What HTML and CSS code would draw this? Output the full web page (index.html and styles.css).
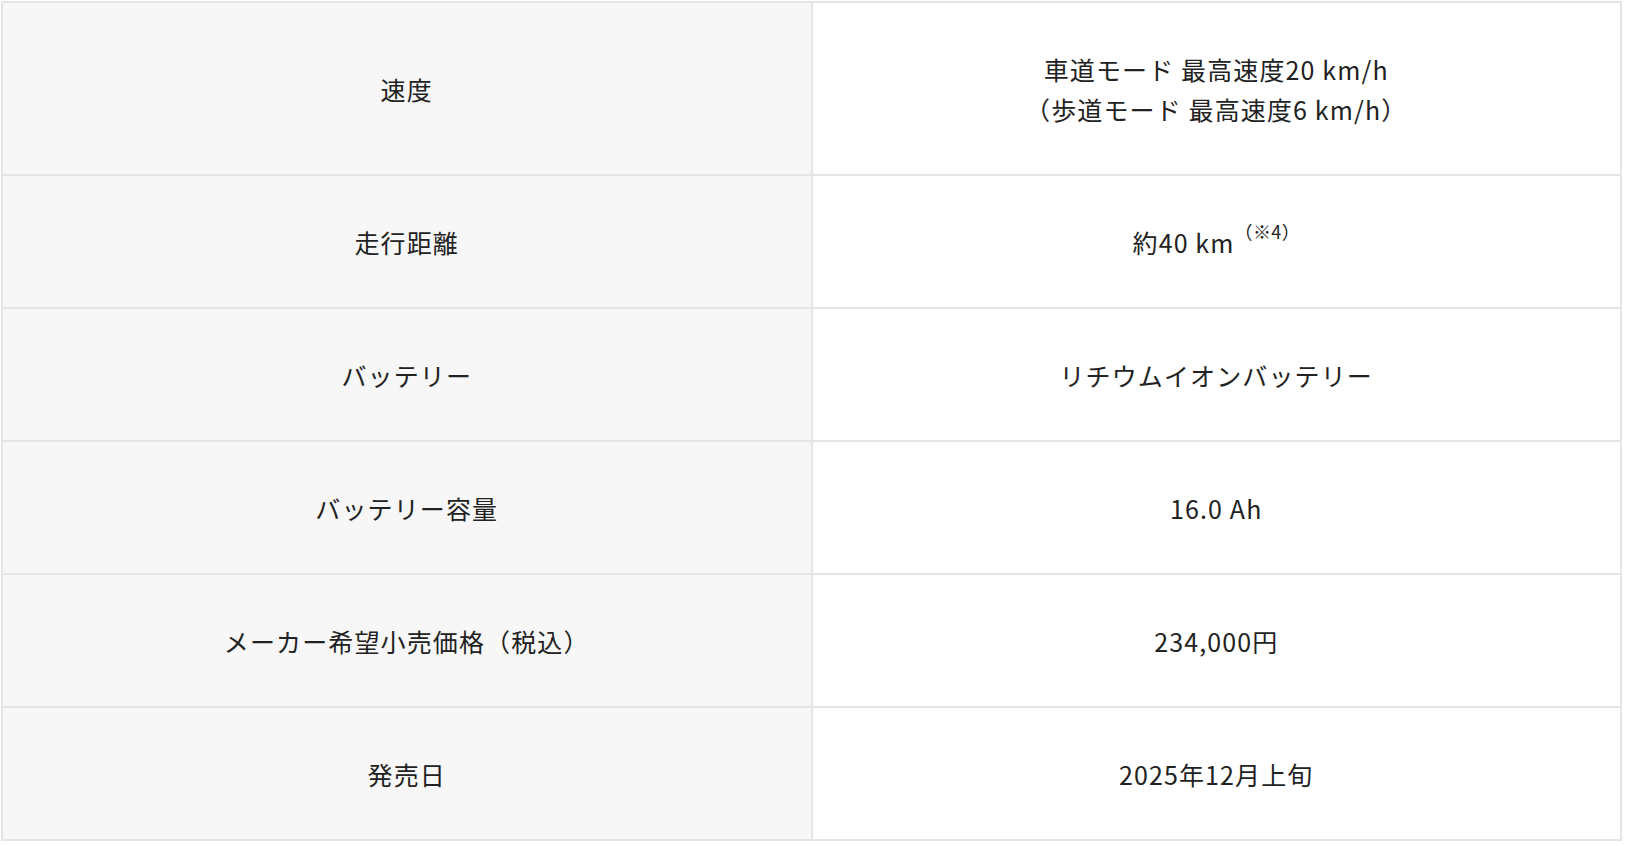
FILE: index.html
```html
<!DOCTYPE html>
<html lang="ja">
<head>
<meta charset="utf-8">
<title>仕様</title>
<link rel="stylesheet" href="styles.css">
</head>
<body>
<table class="spec">
  <tbody>
    <tr>
      <th class="spec-label">速度</th>
      <td class="spec-value">車道モード 最高速度20 km/h<br>（歩道モード 最高速度6 km/h）</td>
    </tr>
    <tr>
      <th class="spec-label">走行距離</th>
      <td class="spec-value">約40 km<sup class="note">（※4）</sup></td>
    </tr>
    <tr>
      <th class="spec-label">バッテリー</th>
      <td class="spec-value">リチウムイオンバッテリー</td>
    </tr>
    <tr>
      <th class="spec-label">バッテリー容量</th>
      <td class="spec-value">16.0 Ah</td>
    </tr>
    <tr>
      <th class="spec-label">メーカー希望小売価格（税込）</th>
      <td class="spec-value">234,000円</td>
    </tr>
    <tr>
      <th class="spec-label">発売日</th>
      <td class="spec-value">2025年12月上旬</td>
    </tr>
  </tbody>
</table>
</body>
</html>
```

FILE: styles.css
```css
html, body {
  margin: 0;
  background: #ffffff;
}

body {
  padding: 1px;
  font-family: "Noto Sans CJK JP", "Noto Sans", sans-serif;
  color: #222222;
}

.spec {
  width: 1621px;
  border-collapse: separate;
  border-spacing: 0;
  table-layout: fixed;
  border-top: 2px solid #e5e5e5;
  border-left: 2px solid #e5e5e5;
}

.spec th,
.spec td {
  width: 50%;
  padding: 45.5px 20px;
  font-size: 25px;
  line-height: 40px;
  letter-spacing: 0.045em;
  font-weight: 400;
  text-align: center;
  vertical-align: middle;
  border-right: 2px solid #e5e5e5;
  border-bottom: 2px solid #e5e5e5;
}

.spec-label {
  background: #f7f7f7;
}

.spec-value {
  background: #ffffff;
}

.note {
  font-size: 18px;
  line-height: 0;
  vertical-align: 14px;
  letter-spacing: 0.02em;
}
```
